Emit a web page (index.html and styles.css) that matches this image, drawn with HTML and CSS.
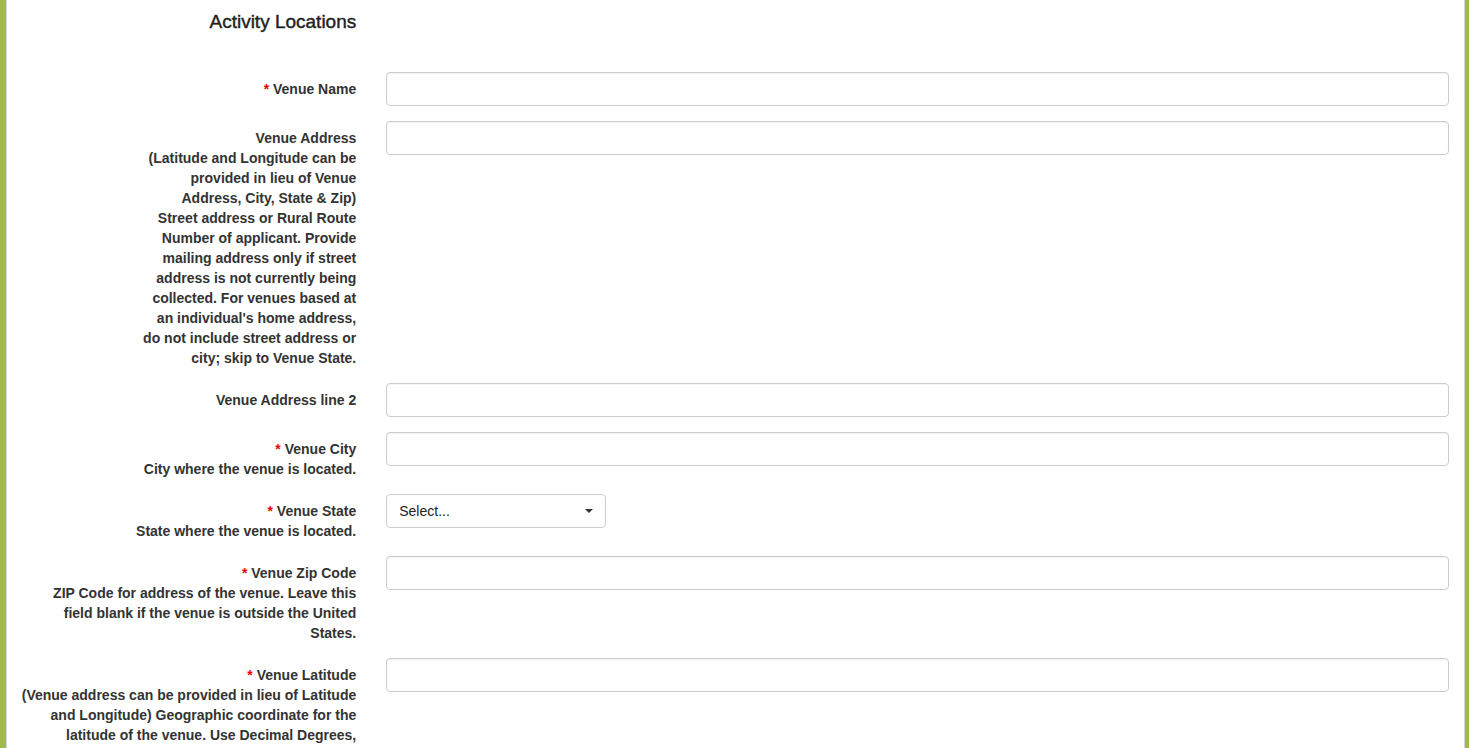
FILE: index.html
```html
<!DOCTYPE html>
<html lang="en">
  <head>
    <meta charset="UTF-8" />
    <title>Activity Locations</title>
    <meta name="viewport" content="width=device-width,initial-scale=1" />
    <link rel="stylesheet" href="styles.css">
  </head>
  <body>
    <div class="panel">
      <form class="form-horizontal">
        <!-- section title -->
        <div class="form-row section-row">
          <h3 class="section-title">Activity Locations</h3>
        </div>

        <div class="form-row">
          <label class="control-label" for="venueName"><span class="req">*</span> Venue Name</label>
          <div class="control"><input type="text" id="venueName" class="form-control" /></div>
        </div>

        <div class="form-row">
          <label class="control-label" for="venueAddress">
            Venue Address
            <span class="help help-narrow">(Latitude and Longitude can be provided in lieu of Venue Address, City, State &amp; Zip) Street address or Rural Route Number of applicant. Provide mailing address only if street address is not currently being collected. For venues based at an individual's home address, do not include street address or city; skip to Venue State.</span>
          </label>
          <div class="control"><input type="text" id="venueAddress" class="form-control" /></div>
        </div>

        <div class="form-row">
          <label class="control-label" for="venueAddress2">Venue Address line 2</label>
          <div class="control"><input type="text" id="venueAddress2" class="form-control" /></div>
        </div>

        <div class="form-row">
          <label class="control-label" for="venueCity">
            <span class="req">*</span> Venue City
            <span class="help">City where the venue is located.</span>
          </label>
          <div class="control"><input type="text" id="venueCity" class="form-control" /></div>
        </div>

        <div class="form-row">
          <label class="control-label">
            <span class="req">*</span> Venue State
            <span class="help">State where the venue is located.</span>
          </label>
          <div class="control">
            <div class="select-box">
              <span>Select...</span>
              <span class="caret"></span>
            </div>
          </div>
        </div>

        <div class="form-row">
          <label class="control-label" for="venueZip">
            <span class="req">*</span> Venue Zip Code
            <span class="help">ZIP Code for address of the venue. Leave this field blank if the venue is outside the United States.</span>
          </label>
          <div class="control"><input type="text" id="venueZip" class="form-control" /></div>
        </div>

        <div class="form-row">
          <label class="control-label" for="venueLat">
            <span class="req">*</span> Venue Latitude
            <span class="help">(Venue address can be provided in lieu of Latitude and Longitude) Geographic coordinate for the latitude of the venue. Use Decimal Degrees, including up to six decimal places.</span>
          </label>
          <div class="control"><input type="text" id="venueLat" class="form-control" /></div>
        </div>
      </form>
    </div>
  </body>
</html>
```

FILE: styles.css
```css
body {
  margin: 0;
  background: #a0bb4a;
  font-family: "Liberation Sans", Arial, sans-serif;
  font-size: 14px;
  line-height: 20px;
  color: #333;
}
.panel {
  background: #fff;
  margin: 0 4px 0 6px;
  border-left: 1px solid #d4d4d4;
  border-right: 1px solid #d4d4d4;
  min-height: 100vh;
}
.form-row {
  display: grid;
  grid-template-columns: 25% 75%;
  margin-bottom: 15px;
}
.section-row {
  margin-bottom: 40px;
}
.section-title {
  margin: 0;
  padding: 12px 15px 0;
  font-size: 19px;
  font-weight: normal;
  line-height: 20px;
  text-align: right;
  color: #222;
  -webkit-text-stroke: 0.4px #222;
}
.control-label {
  padding: 7px 15px 0 14px;
  text-align: right;
  font-weight: bold;
}
.help {
  display: block;
}
.help-narrow {
  max-width: 214px;
  margin-left: auto;
}
.req {
  color: #e00;
}
.control {
  padding: 0 15px;
}
.form-control {
  display: block;
  box-sizing: border-box;
  width: 100%;
  height: 34px;
  padding: 6px 12px;
  font: inherit;
  border: 1px solid #ccc;
  border-radius: 4px;
  box-shadow: inset 0 1px 1px rgba(0, 0, 0, 0.05);
}
.select-box {
  box-sizing: border-box;
  width: 220px;
  height: 34px;
  padding: 6px 12px;
  border: 1px solid #ccc;
  border-radius: 4px;
  display: flex;
  align-items: center;
  justify-content: space-between;
  color: #222;
}
.caret {
  width: 0;
  height: 0;
  border-top: 4px solid #333;
  border-left: 4px solid transparent;
  border-right: 4px solid transparent;
}
```
